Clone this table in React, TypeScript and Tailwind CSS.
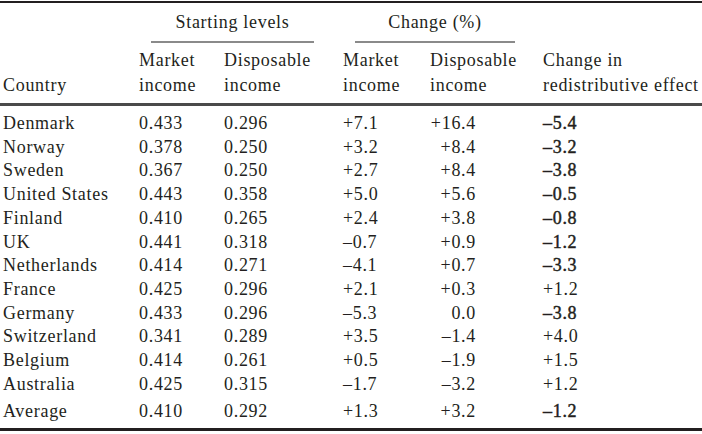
const rows = [
  { country: 'Denmark', mkt: '0.433', disp: '0.296', cMkt: '+7.1', cDisp: '+16.4', redist: '–5.4' },
  { country: 'Norway', mkt: '0.378', disp: '0.250', cMkt: '+3.2', cDisp: '+8.4', redist: '–3.2' },
  { country: 'Sweden', mkt: '0.367', disp: '0.250', cMkt: '+2.7', cDisp: '+8.4', redist: '–3.8' },
  { country: 'United States', mkt: '0.443', disp: '0.358', cMkt: '+5.0', cDisp: '+5.6', redist: '–0.5' },
  { country: 'Finland', mkt: '0.410', disp: '0.265', cMkt: '+2.4', cDisp: '+3.8', redist: '–0.8' },
  { country: 'UK', mkt: '0.441', disp: '0.318', cMkt: '–0.7', cDisp: '+0.9', redist: '–1.2' },
  { country: 'Netherlands', mkt: '0.414', disp: '0.271', cMkt: '–4.1', cDisp: '+0.7', redist: '–3.3' },
  { country: 'France', mkt: '0.425', disp: '0.296', cMkt: '+2.1', cDisp: '+0.3', redist: '+1.2' },
  { country: 'Germany', mkt: '0.433', disp: '0.296', cMkt: '–5.3', cDisp: '0.0', redist: '–3.8' },
  { country: 'Switzerland', mkt: '0.341', disp: '0.289', cMkt: '+3.5', cDisp: '–1.4', redist: '+4.0' },
  { country: 'Belgium', mkt: '0.414', disp: '0.261', cMkt: '+0.5', cDisp: '–1.9', redist: '+1.5' },
  { country: 'Australia', mkt: '0.425', disp: '0.315', cMkt: '–1.7', cDisp: '–3.2', redist: '+1.2' },
];

const average = { country: 'Average', mkt: '0.410', disp: '0.292', cMkt: '+1.3', cDisp: '+3.2', redist: '–1.2' };

type Row = typeof average;

const cols = 'grid grid-cols-[136px_85px_119px_87px_113px_1fr] pl-[3px]';

function DataRow({ row }: { row: Row }) {
  // negative redistributive changes are set in a heavier weight
  const neg = row.redist.startsWith('–');
  return (
    <div className={`${cols} leading-[23.7px]`}>
      <div>{row.country}</div>
      <div>{row.mkt}</div>
      <div>{row.disp}</div>
      <div>{row.cMkt}</div>
      <div>
        <div className="w-[46px] text-right">{row.cDisp}</div>
      </div>
      <div className={neg ? '[-webkit-text-stroke:0.45px_#231f20]' : ''}>{row.redist}</div>
    </div>
  );
}

export default function App() {
  return (
    <div className="w-[702px] h-[434px] bg-white text-[#231f20] text-[18px] tracking-[0.7px] font-['Liberation_Serif','Times_New_Roman',serif] overflow-hidden">
      <div className="mt-[1px] h-[2px] bg-[#231f20]" />

      {/* Header */}
      <div className={`${cols} pt-[7px] leading-[24px]`}>
        <div />
        <div className="col-span-2 mr-[29px] pl-[12px] text-center">
          Starting levels
          <div className="mt-[7px] h-[2px] bg-[#8a8a8a]" />
        </div>
        <div className="col-span-2 mr-[28px] pl-[12px] text-center">
          Change (%)
          <div className="mt-[7px] h-[2px] bg-[#8a8a8a]" />
        </div>
        <div />
      </div>
      <div className={`${cols} mt-[5px] leading-[25px] items-end`}>
        <div>Country</div>
        <div>Market<br />income</div>
        <div>Disposable<br />income</div>
        <div>Market<br />income</div>
        <div>Disposable<br />income</div>
        <div>Change in<br />redistributive effect</div>
      </div>
      <div className="mt-[5px] h-[3px] bg-[#4a4a4a]" />

      {/* Body */}
      <div className="mt-[6px]">
        {rows.map((r) => (
          <DataRow key={r.country} row={r} />
        ))}
      </div>
      <div className="mt-[4px]">
        <DataRow row={average} />
      </div>
      <div className="mt-[4px] h-[3px] bg-[#231f20]" />
    </div>
  );
}
